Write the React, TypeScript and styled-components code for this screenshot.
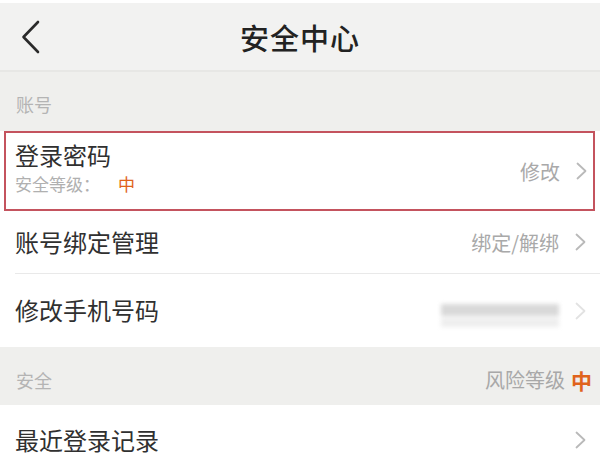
import React from "react";
import styled, { createGlobalStyle } from "styled-components";

const GlobalStyle = createGlobalStyle`
  html, body {
    margin: 0;
    padding: 0;
    background: #ffffff;
  }
  body {
    font-family: "Noto Sans CJK SC", "Noto Sans", sans-serif;
    color: #333333;
  }
`;

const Page = styled.div`
  width: 600px;
  height: 471px;
  overflow: hidden;
  padding-top: 3px;
  box-sizing: border-box;
  background: #ffffff;
`;

const Header = styled.header`
  height: 67px;
  display: grid;
  grid-template-columns: 60px 1fr 60px;
  align-items: center;
  background: #f2f2f1;
  border-bottom: 2px solid #e7e7e5;
`;

const BackButton = styled.div`
  display: flex;
  align-items: center;
  padding-left: 20px;
  height: 100%;
`;

const Title = styled.h1`
  margin: 0;
  text-align: center;
  font-size: 29px;
  font-weight: 500;
  color: #222222;
  letter-spacing: 1px;
  line-height: 1;
  padding-top: 2px;
`;

const SectionHeader = styled.div<{ $height: number; $offset: number }>`
  height: ${(p) => p.$height}px;
  box-sizing: border-box;
  padding: ${(p) => p.$offset}px 8px 0 16px;
  display: flex;
  align-items: center;
  justify-content: space-between;
  background: #efefed;
`;

const SectionLabel = styled.span`
  font-size: 18px;
  color: #b4b4b4;
`;

const Risk = styled.span`
  font-size: 20px;
  color: #a8a8a8;
  display: flex;
  align-items: center;
  gap: 6px;
`;

const Level = styled.span<{ $size: number }>`
  font-size: ${(p) => p.$size}px;
  font-weight: 700;
  color: #e0631c;
`;

const HighlightRow = styled.div`
  height: 80px;
  margin: 0 5px 0 4px;
  box-sizing: border-box;
  border: 2px solid #c4535e;
  display: flex;
  align-items: center;
  justify-content: space-between;
  padding: 0 5px 0 9px;
`;

const Row = styled.div<{ $height: number; $divider?: boolean }>`
  height: ${(p) => p.$height}px;
  box-sizing: border-box;
  margin-left: 15px;
  padding-right: 13px;
  display: flex;
  align-items: center;
  justify-content: space-between;
  border-bottom: ${(p) => (p.$divider ? "1px solid #e9e9e9" : "none")};
`;

const TitleBlock = styled.div`
  display: flex;
  flex-direction: column;
  gap: 8px;
  padding-bottom: 8px;
`;

const RowTitle = styled.span`
  font-size: 24px;
  color: #303030;
  line-height: 1.2;
`;

const BlockTitle = styled(RowTitle)`
  line-height: 1;
`;

const SubTitle = styled.span`
  font-size: 17px;
  line-height: 1;
  color: #b0b0b0;
  display: flex;
  align-items: center;
`;

const SubLevel = styled.span`
  margin-left: 18px;
  font-size: 17px;
  color: #e0631c;
`;

const Trailing = styled.div`
  display: flex;
  align-items: center;
  gap: 15px;
`;

const Value = styled.span`
  font-size: 20px;
  color: #a9a9a9;
`;

const Blurred = styled.div`
  display: flex;
  flex-direction: column;
  gap: 2px;
  width: 118px;
  filter: blur(2px);
  margin-top: 10px;
`;

const BlurBar = styled.div<{ $tone: string; $h: number }>`
  height: ${(p) => p.$h}px;
  background: ${(p) => p.$tone};
`;

const Chevron = ({ color = "#b9b9b9" }: { color?: string }) => (
  <svg width="13" height="18" viewBox="0 0 13 18">
    <path
      d="M2.5 1.5 L10.5 9 L2.5 16.5"
      fill="none"
      stroke={color}
      strokeWidth="1.8"
      strokeLinecap="round"
      strokeLinejoin="round"
    />
  </svg>
);

const BackIcon = () => (
  <svg width="22" height="34" viewBox="0 0 22 34">
    <path
      d="M18 2 L3.5 17 L18 32"
      fill="none"
      stroke="#2a2a2a"
      strokeWidth="2.6"
      strokeLinecap="round"
      strokeLinejoin="round"
    />
  </svg>
);

export default function App() {
  return (
    <Page>
      <GlobalStyle />
      <Header>
        <BackButton>
          <BackIcon />
        </BackButton>
        <Title>安全中心</Title>
        <div />
      </Header>

      <SectionHeader $height={59} $offset={5}>
        <SectionLabel>账号</SectionLabel>
      </SectionHeader>

      <HighlightRow>
        <TitleBlock>
          <BlockTitle>登录密码</BlockTitle>
          <SubTitle>
            安全等级：<SubLevel>中</SubLevel>
          </SubTitle>
        </TitleBlock>
        <Trailing>
          <Value>修改</Value>
          <Chevron />
        </Trailing>
      </HighlightRow>

      <Row $height={63} $divider>
        <RowTitle>账号绑定管理</RowTitle>
        <Trailing>
          <Value>绑定/解绑</Value>
          <Chevron />
        </Trailing>
      </Row>

      <Row $height={73}>
        <RowTitle>修改手机号码</RowTitle>
        <Trailing>
          <Blurred>
            <BlurBar $tone="#d9d9d9" $h={12} />
            <BlurBar $tone="#eeeeee" $h={9} />
          </Blurred>
          <Chevron color="#e2e2e2" />
        </Trailing>
      </Row>

      <SectionHeader $height={58} $offset={7}>
        <SectionLabel>安全</SectionLabel>
        <Risk>
          风险等级<Level $size={21}>中</Level>
        </Risk>
      </SectionHeader>

      <Row $height={70}>
        <RowTitle>最近登录记录</RowTitle>
        <Trailing>
          <Chevron />
        </Trailing>
      </Row>
    </Page>
  );
}
